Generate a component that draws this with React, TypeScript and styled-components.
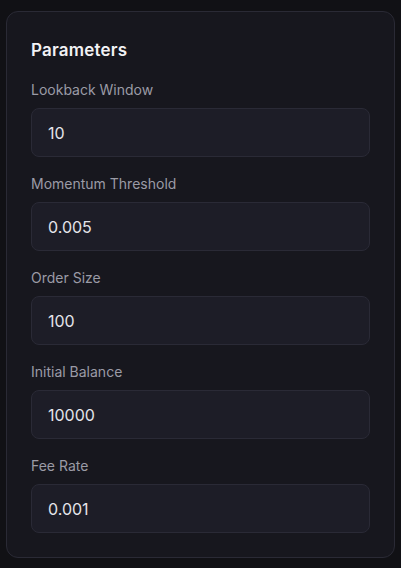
import React from "react";
import styled, { createGlobalStyle } from "styled-components";

const GlobalStyle = createGlobalStyle`
  html, body {
    margin: 0;
    padding: 0;
    background: #111115;
  }
  body {
    font-family: Inter, "Noto Sans", "Liberation Sans", sans-serif;
  }
  * { box-sizing: border-box; }
`;

const Page = styled.div`
  padding: 11px 6px 10px;
  min-height: 568px;
  background: #111115;
`;

const Card = styled.section`
  background: #17171e;
  border: 1px solid #2a2a35;
  border-radius: 12px;
  padding: 24px;
  display: flex;
  flex-direction: column;
`;

const Title = styled.h2`
  margin: 2px 0 18px;
  font-size: 17px;
  line-height: 24px;
  font-weight: 600;
  color: #f2f2f5;
  letter-spacing: 0.2px;
`;

const Fields = styled.div`
  display: flex;
  flex-direction: column;
  gap: 17px;
`;

const Field = styled.label`
  display: flex;
  flex-direction: column;
  gap: 8px;
`;

const LabelText = styled.span`
  font-size: 14px;
  line-height: 20px;
  color: #9b9ba6;
`;

const Input = styled.input`
  height: 49px;
  width: 100%;
  padding: 0 16px;
  border: 1px solid #2a2a36;
  border-radius: 8px;
  background: #1d1d27;
  color: #e4e4ea;
  font-family: inherit;
  font-size: 16px;
  outline: none;
`;

const params = [
  { label: "Lookback Window", value: "10" },
  { label: "Momentum Threshold", value: "0.005" },
  { label: "Order Size", value: "100" },
  { label: "Initial Balance", value: "10000" },
  { label: "Fee Rate", value: "0.001" },
];

export default function App() {
  return (
    <>
      <GlobalStyle />
      <Page>
        <Card>
          <Title>Parameters</Title>
          <Fields>
            {params.map((p) => (
              <Field key={p.label}>
                <LabelText>{p.label}</LabelText>
                <Input type="text" defaultValue={p.value} />
              </Field>
            ))}
          </Fields>
        </Card>
      </Page>
    </>
  );
}
